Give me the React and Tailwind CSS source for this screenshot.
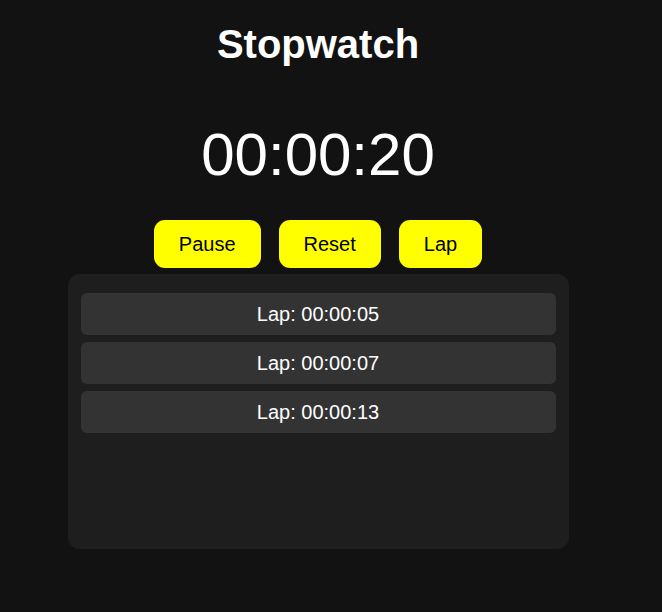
export default function App() {
  const laps = ["00:00:05", "00:00:07", "00:00:13"];
  return (
    <div className="min-h-[612px] w-full bg-[#121212] text-white font-['Liberation_Sans',Arial,sans-serif]">
      <div className="w-[636px] flex flex-col items-center pt-[21px]">
        <h1 className="text-[40px] leading-[46px] font-bold text-white">Stopwatch</h1>
        <div className="mt-[53px] text-[60px] leading-[69px] font-normal">00:00:20</div>
        <div className="mt-[31px] flex gap-[18px]">
          {["Pause", "Reset", "Lap"].map((b) => (
            <button
              key={b}
              className="h-[48px] px-[25px] rounded-[11px] bg-[#ffff00] text-black text-[20px] leading-[23px]"
            >
              {b}
            </button>
          ))}
        </div>
        <div className="mt-[6px] w-[501px] h-[275px] rounded-[12px] bg-[#1e1e1e] px-[13px] pt-[19px] flex flex-col gap-[7px]">
          {laps.map((l) => (
            <div
              key={l}
              className="h-[42px] rounded-[6px] bg-[#333333] flex items-center justify-center text-[20px] leading-[23px] text-white"
            >
              Lap: {l}
            </div>
          ))}
        </div>
      </div>
    </div>
  );
}
